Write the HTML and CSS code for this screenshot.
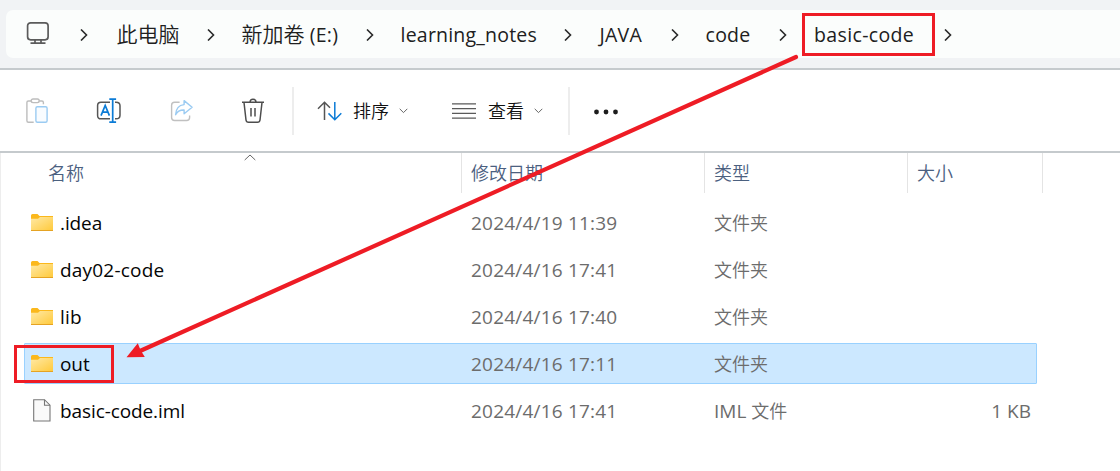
FILE: index.html
```html
<!DOCTYPE html>
<html lang="zh-CN">
<head>
<meta charset="utf-8">
<title>basic-code</title>
<link rel="stylesheet" href="styles.css">
</head>
<body>
<svg class="defs" width="0" height="0">
  <defs>
    <linearGradient id="fold" x1="0" y1="0" x2="1" y2="1"><stop offset="0" stop-color="#ffe9a6"/><stop offset="1" stop-color="#ffca3c"/></linearGradient>
    <symbol id="folder" viewBox="0 0 22 18"><path d="M0 1.5Q0 0 1.5 0H6.5L8.5 2H22V16H0Z" fill="#fbb81c"/><path d="M0 4.7H7L9 3H22V16.3H0Z" fill="url(#fold)"/><path d="M0 16.5H22" stroke="#e5a323"/></symbol>
    <symbol id="chev" viewBox="0 0 8 12"><path d="M1 .5 6.5 6 1 11.500" fill="none" stroke="#2b2b2b" stroke-width="1.6"/></symbol>
    <symbol id="down" viewBox="0 0 9 6"><path d="M.7.8 4.5 4.6 8.3.8" fill="none" stroke="#666"/></symbol>
  </defs>
</svg>
<div class="window">
  <header class="address">
    <nav class="crumbs">
      <svg class="pc" width="24" height="24" viewBox="0 0 24 24" fill="none" stroke="#5b5b5b" stroke-width="1.7"><rect x="1.6" y="1.8" width="20.500" height="17" rx="3"/><path d="M9 19v3M15 19v3M4.500 22.2h15"/></svg>
      <svg class="chev"><use href="#chev"/></svg>
      <span class="crumb c1"><span class="zh">此电脑</span></span>
      <svg class="chev"><use href="#chev"/></svg>
      <span class="crumb c2"><span class="zh">新加卷</span> (E:)</span>
      <svg class="chev"><use href="#chev"/></svg>
      <span class="crumb c3">learning_notes</span>
      <svg class="chev"><use href="#chev"/></svg>
      <span class="crumb c4">JAVA</span>
      <svg class="chev"><use href="#chev"/></svg>
      <span class="crumb c5">code</span>
      <svg class="chev"><use href="#chev"/></svg>
      <span class="crumb c6">basic-code</span>
      <svg class="chev"><use href="#chev"/></svg>
    </nav>
  </header>
  <div class="toolbar">
    <svg class="tool" viewBox="0 0 26 26" fill="none" stroke-width="1.4"><g transform="translate(1.2 0)"><path d="M6 3H3.2Q1.7 3 1.7 4.5V22.7Q1.7 24.2 3.2 24.2H8.5M14 3h2.7q1.500 0 1.500 1.500V6.3" stroke="#bdbdbd"/><rect x="6" y="1" width="8" height="3.6" rx="1.8" stroke="#bdbdbd"/><rect x="10.7" y="8.7" width="11.2" height="15.5" rx="1.5" stroke="#9bcbf2" fill="#f9fcff"/></g></svg>
    <svg class="tool" viewBox="0 0 26 26" fill="none" stroke-width="1.5"><path d="M14 4.2H5Q1.6 4.2 1.6 7.6V17.4Q1.6 20.8 5 20.8H14M19 4.2h1q4 0 4 3.6v9.4q0 3.6-4 3.6h-1" stroke="#565656"/><path d="M5 17.6 9.2 7.5 13.4 17.6M6.5 14.2H12M16.7 1.5V24M13.3 1.2H20.1M13.3 24.1H20.1" stroke="#0b7bd6" stroke-width="1.7"/></svg>
    <svg class="tool" viewBox="0 0 26 26" fill="none" stroke-width="1.4"><g transform="translate(.6 0)"><path d="M11 4.2H6Q3 4.2 3 7.2V19.5Q3 22.5 6 22.5H18Q21 22.5 21 19.5V17.5" stroke="#c0c0c0"/><path d="M15.5 2.6 23.5 9.2 15.5 15.8V12Q9.5 11.8 7 16.7 7.5 7.4 15.5 6.6Z" stroke="#9bcbf2" stroke-linejoin="round"/></g></svg>
    <svg class="tool" viewBox="0 0 26 26" fill="none" stroke="#4d4d4d" stroke-width="1.5"><path d="M2 4.3H24M10 4.2Q10 1.3 13 1.3T16 4.2M4 4.5 6 22Q6.3 24.2 8.5 24.2H17.5Q19.7 24.2 20 22L22 4.5M11 10v8.5M15 10v8.5"/></svg>
    <div class="group sort">
      <svg width="26" height="20" viewBox="0 0 26 20" fill="none" stroke-width="1.5"><path d="M7.5 19V1.3M1 7.8 7.5 1.3 13 6.8" stroke="#555"/><path d="M17.8 1V18.7M11.5 12.4 17.8 18.7 24.3 12.2" stroke="#0b7bd6"/></svg>
      <span class="label">排序</span>
      <svg class="down"><use href="#down"/></svg>
    </div>
    <div class="group view">
      <svg width="24" height="16" viewBox="0 0 24 16"><path d="M0 .9H24M0 5.6H24M0 10.4H24M0 15.1H24" stroke="#5a5a5a" stroke-width="1.3"/></svg>
      <span class="label">查看</span>
      <svg class="down"><use href="#down"/></svg>
    </div>
    <div class="group more">
      <svg width="26" height="6" viewBox="0 0 26 6" fill="#1c1c1c"><circle cx="3.5" cy="3" r="2.4"/><circle cx="13" cy="3" r="2.4"/><circle cx="22.5" cy="3" r="2.4"/></svg>
    </div>
  </div>
  <main class="list">
    <div class="head">
      <span class="h name">名称<svg class="up" width="12" height="7" viewBox="0 0 12 7"><path d="M.7 6 6 1 11.3 6" fill="none" stroke="#666"/></svg></span>
      <span class="h">修改日期</span><span class="h">类型</span><span class="h">大小</span>
    </div>
    <div class="rows">
      <div class="row"><svg class="ico"><use href="#folder"/></svg><span class="file">.idea</span><span class="date">2024/4/19 11:39</span><span class="type"><span class="zh">文件夹</span></span><span class="size"></span></div>
      <div class="row"><svg class="ico"><use href="#folder"/></svg><span class="file wide">day02-code</span><span class="date">2024/4/16 17:41</span><span class="type"><span class="zh">文件夹</span></span><span class="size"></span></div>
      <div class="row"><svg class="ico"><use href="#folder"/></svg><span class="file wide">lib</span><span class="date">2024/4/16 17:40</span><span class="type"><span class="zh">文件夹</span></span><span class="size"></span></div>
      <div class="row selected"><svg class="ico"><use href="#folder"/></svg><span class="file">out</span><span class="date">2024/4/16 17:11</span><span class="type"><span class="zh">文件夹</span></span><span class="size"></span></div>
      <div class="row"><svg class="doc" width="18" height="23" viewBox="0 0 18 23"><path d="M.7.7H11.5L17 6.2V22H.7Z" fill="#fafafa" stroke="#777" stroke-width="1.1"/><path d="M11.5.7V6.2H17" fill="none" stroke="#777" stroke-width="1.1"/></svg><span class="file">basic-code.iml</span><span class="date">2024/4/16 17:41</span><span class="type">IML <span class="zh">文件</span></span><span class="size">1 KB</span></div>
    </div>
  </main>
  <svg class="marks" width="1120" height="471" viewBox="0 0 1120 471">
    <g fill="none" stroke="#ee1c25"><rect x="803.5" y="14.5" width="130" height="40" stroke-width="3"/><rect x="15.5" y="346.5" width="97" height="35" stroke-width="3"/><path d="M796 57 140 351" stroke-width="4.2" stroke-linecap="round"/></g>
    <path d="M126.500 357.200 137.800 343.300 140.500 350 144.800 357Z" fill="#ee1c25"/>
  </svg>
</div>
</body>
</html>
```
FILE: styles.css
```css
* { box-sizing: border-box; }
body { margin: 0; background: #fff; font-family: "Open Sans", "Noto Sans CJK SC", sans-serif; }
.defs { position: absolute; }
.window { position: relative; width: 1120px; height: 471px; overflow: hidden; }
.address { height: 70px; padding: 10px 0 0 6px; background: #f1f3f5; border-bottom: 2px solid #c5cacd; }
.crumbs { display: flex; align-items: center; height: 48px; padding-left: 20px; background: #fbfdfc; border-radius: 7px 0 0 7px; color: #202020; font-size: 19.5px; }
.pc { margin: 0 29.6px 2px 0; }
.chev { width: 8px; height: 12px; flex: none; margin-top: 2px; }
.crumb { flex: none; padding-top: 1px; padding-left: 29px; white-space: nowrap; line-height: 28px; letter-spacing: .2px; }
.crumb .zh { font-size: 21px; font-weight: 350; letter-spacing: 0; }
.c1 { width: 119px; }
.c2 { width: 151px; padding-left: 27px; }
.c3 { width: 190px; padding-left: 27px; }
.c4 { width: 99px; padding-left: 28px; }
.c5 { width: 100px; padding-left: 27px; }
.c6 { width: 157px; padding-left: 27.5px; letter-spacing: .35px; }
.toolbar { display: flex; align-items: center; height: 83px; padding-left: 24px; border-bottom: 2px solid #c5cacd; }
.tool { width: 26px; height: 26px; margin-right: 46px; flex: none; }
.group { display: flex; align-items: center; height: 48px; }
.sort { width: 160px; margin-left: -20px; padding-left: 23px; border-left: 2px solid #ededed; }
.view { width: 116px; }
.more { padding: 2px 0 0 23px; border-left: 2px solid #ededed; }
.label { width: 46px; margin-left: 10px; padding-bottom: 1px; font: 350 18px/24px "Noto Sans CJK SC", sans-serif; color: #111; }
.view .label { margin-left: 12px; }
.down { width: 9px; height: 6px; }
.list { height: 318px; border-left: 1px solid #ededed; }
.head { display: grid; grid-template-columns: 461px 243px 203px 135px; height: 40px; color: #4b607f; font: 350 18px/38px "Noto Sans CJK SC", sans-serif; }
.h { padding-left: 9px; border-right: 1px solid #e4e4e4; }
.name { position: relative; padding-left: 47px; }
.up { position: absolute; left: 243px; top: 1px; }
.rows { display: grid; row-gap: 6px; padding: 9px 0 0 23px; }
.row { display: grid; grid-template-columns: 29px 411px 243px 203px 114px; align-items: center; width: 1013px; height: 41px; padding-left: 6px; border: 1px solid transparent; border-radius: 1px; font-size: 19px; line-height: 26px; color: #6c6c6c; }
.row .zh { font-size: 18px; font-weight: 350; }
.selected { background: #cce8ff; border-color: #99d1ff; }
.ico { width: 22px; height: 18px; }
.doc { margin-left: 2px; }
.file { color: #050505; letter-spacing: -.1px; }
.wide { letter-spacing: .2px; }
.date { letter-spacing: .2px; }
.size { text-align: right; }
.marks { position: absolute; left: 0; top: 0; }
```
